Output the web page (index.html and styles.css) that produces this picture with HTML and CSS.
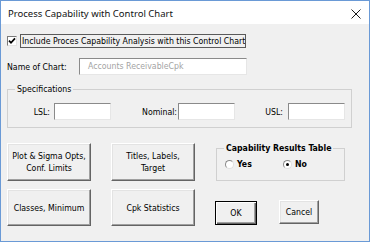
FILE: index.html
```html
<!DOCTYPE html>
<html>
<head>
<meta charset="utf-8">
<title>Process Capability with Control Chart</title>
<link rel="stylesheet" href="styles.css">
</head>
<body>
<div class="window">
  <div class="titlebar">
    <span class="title">Process Capability with Control Chart</span>
    <svg class="close" width="10" height="10" viewBox="0 0 10 10"><path d="M0.5 0.5 L9.5 9.5 M9.5 0.5 L0.5 9.5" stroke="#1a1a1a" stroke-width="1" fill="none"/></svg>
  </div>
  <div class="content">
    <div class="check-row">
      <span class="checkbox"><svg width="8" height="8" viewBox="0 0 8 8"><path d="M1 3.6 L3 5.8 L7 1.4" stroke="#000" stroke-width="1.7" fill="none"/></svg></span>
      <span class="check-label">Include Proces Capability Analysis with this Control Chart</span>
    </div>
    <div class="name-row">
      <span class="name-label">Name of Chart:</span>
      <div class="textbox name-box">Accounts ReceivableCpk</div>
    </div>
    <fieldset class="group specs">
      <legend>Specifications</legend>
      <div class="spec-row">
        <span class="spec-label lsl">LSL:</span><div class="textbox spec-box"></div>
        <span class="spec-label nominal">Nominal:</span><div class="textbox spec-box"></div>
        <span class="spec-label usl">USL:</span><div class="textbox spec-box"></div>
      </div>
    </fieldset>
    <div class="lower">
      <div class="btn-grid">
        <button class="btn">Plot &amp; Sigma Opts,<br>Conf. Limits</button>
        <button class="btn">Titles, Labels,<br>Target</button>
        <button class="btn">Classes, Minimum</button>
        <button class="btn">Cpk Statistics</button>
      </div>
      <div class="right-col">
        <fieldset class="group results">
          <legend>Capability Results Table</legend>
          <div class="radio-row">
            <span class="radio-item"><span class="radio"></span>Yes</span>
            <span class="radio-item"><span class="radio checked"></span>No</span>
          </div>
        </fieldset>
        <div class="action-row">
          <button class="btn ok">OK</button>
          <button class="btn cancel">Cancel</button>
        </div>
      </div>
    </div>
  </div>
</div>
</body>
</html>
```
FILE: styles.css
```css
* { box-sizing: border-box; }
html, body { margin: 0; padding: 0; background: #f0f0f0; }
body {
  font-family: "DejaVu Sans Condensed", "DejaVu Sans", sans-serif;
  font-stretch: condensed;
  font-size: 8.7px;
  color: #000;
}
.window {
  width: 370px;
  height: 242px;
  border: 1px solid #6a9ad6;
  background: #f0f0f0;
  display: flex;
  flex-direction: column;
}
.titlebar {
  height: 23px;
  flex: none;
  background: #fff;
  display: flex;
  align-items: center;
  justify-content: space-between;
  padding: 2px 8px 0 7px;
}
.title {
  font-family: "Noto Sans", "Open Sans", sans-serif;
  font-stretch: normal;
  font-size: 9.5px;
  color: #111;
}
.close { display: block; }
.content { padding: 0 0 0 6px; }

.check-row {
  display: flex;
  align-items: center;
  margin-top: 10px;
  height: 14px;
}
.checkbox {
  width: 10px;
  height: 10px;
  background: #fff;
  border: 1px solid;
  border-color: #7a7a7a #e3e3e3 #e3e3e3 #7a7a7a;
  margin-right: 3px;
  display: flex;
  align-items: center;
  justify-content: center;
}
.checkbox svg { display: block; }
.check-label {
  width: 226px;
  height: 14px;
  border: 1px solid #5a5a5a;
  padding-left: 1px;
  line-height: 12px;
  white-space: nowrap;
  overflow: hidden;
}

.name-row {
  display: flex;
  align-items: center;
  margin-top: 10px;
  height: 17px;
}
.name-label { width: 72px; }
.textbox {
  height: 17px;
  background: #fff;
  border: 1px solid;
  border-color: #8a8a8a #e6e6e6 #e6e6e6 #8a8a8a;
}
.name-box {
  width: 168px;
  padding-left: 8px;
  line-height: 15px;
  color: #a3a3a3;
}

.group {
  margin: 0;
  padding: 0;
  border: 1px solid #d0d0d0;
  min-width: 0;
}
.group legend {
  padding: 0 2px;
  margin-left: 7px;
  line-height: 11px;
  white-space: nowrap;
}
.specs {
  margin-top: 9px;
  width: 345px;
  padding: 8px 0 7px 0;
}
.spec-row { display: flex; align-items: center; }
.spec-label { text-align: right; }
.lsl { width: 46px; padding-right: 4px; }
.nominal { width: 67px; padding-right: 1px; }
.usl { width: 53px; padding-right: 5px; }
.spec-box { width: 57px; }

.lower {
  display: flex;
  margin-top: 15px;
}
.btn-grid {
  display: grid;
  grid-template-columns: 84px 84px;
  grid-template-rows: 38px 37px;
  column-gap: 20px;
  row-gap: 8px;
}
.btn {
  font: inherit;
  color: #000;
  margin: 0;
  padding: 0;
  background: #f0f0f0;
  border: 1px solid;
  border-color: #ffffff #646464 #646464 #ffffff;
  box-shadow: inset -1px -1px #a0a0a0, inset 1px 1px #e3e3e3;
  line-height: 12px;
  text-align: center;
}
.right-col {
  margin-left: 21px;
  display: flex;
  flex-direction: column;
}
.results {
  width: 129px;
  padding: 6px 0 11px 8px;
}
.results legend { font-weight: bold; line-height: 10px; margin-left: -1px; }
.radio-row { display: flex; height: 10px; align-items: center; }
.radio-item {
  width: 58px;
  display: flex;
  align-items: center;
  font-weight: bold;
}
.radio {
  width: 9px;
  height: 9px;
  border-radius: 50%;
  background: #fff;
  border: 1px solid;
  border-color: #8a8a8a #e0e0e0 #e0e0e0 #8a8a8a;
  margin-right: 3px;
  display: flex;
  align-items: center;
  justify-content: center;
}
.radio.checked::after {
  content: "";
  width: 3px;
  height: 3px;
  border-radius: 50%;
  background: #000;
}
.action-row {
  display: flex;
  align-items: flex-start;
  margin-top: 20px;
}
.ok {
  width: 42px;
  height: 24px;
  margin-left: -1px;
  border: 1px solid #000;
  box-shadow: inset 1px 1px #fff, inset -1px -1px #646464, inset -2px -2px #a0a0a0;
}
.cancel {
  width: 40px;
  height: 24px;
  margin-left: 22px;
  margin-top: -1px;
}
```
